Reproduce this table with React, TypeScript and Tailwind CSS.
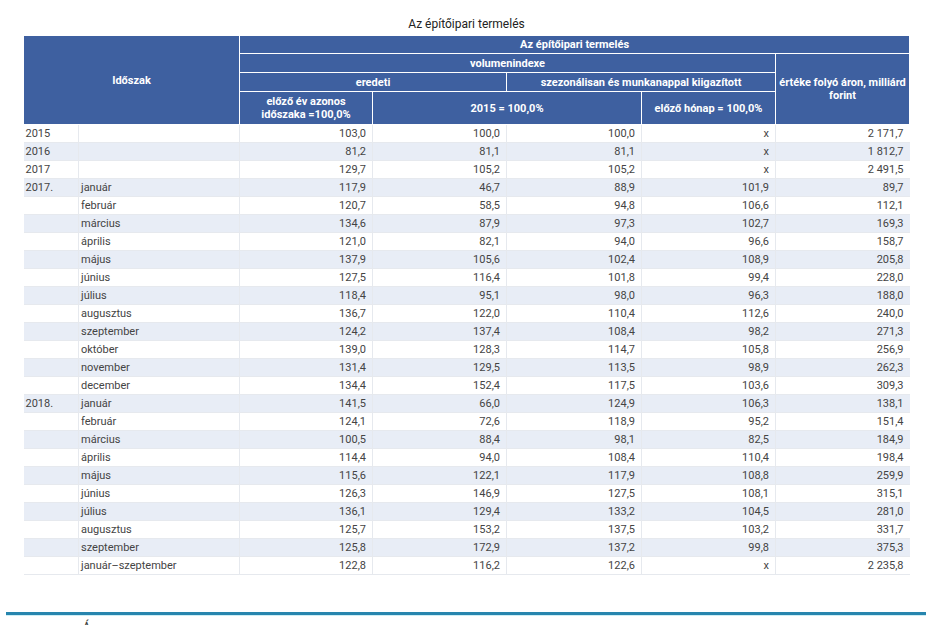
import React from "react";

type Row = { year: string; month: string; v: string[] };

const rows: Row[] = [
  { year: "2015", month: "", v: ["103,0", "100,0", "100,0", "x", "2 171,7"] },
  { year: "2016", month: "", v: ["81,2", "81,1", "81,1", "x", "1 812,7"] },
  { year: "2017", month: "", v: ["129,7", "105,2", "105,2", "x", "2 491,5"] },
  { year: "2017.", month: "január", v: ["117,9", "46,7", "88,9", "101,9", "89,7"] },
  { year: "", month: "február", v: ["120,7", "58,5", "94,8", "106,6", "112,1"] },
  { year: "", month: "március", v: ["134,6", "87,9", "97,3", "102,7", "169,3"] },
  { year: "", month: "április", v: ["121,0", "82,1", "94,0", "96,6", "158,7"] },
  { year: "", month: "május", v: ["137,9", "105,6", "102,4", "108,9", "205,8"] },
  { year: "", month: "június", v: ["127,5", "116,4", "101,8", "99,4", "228,0"] },
  { year: "", month: "július", v: ["118,4", "95,1", "98,0", "96,3", "188,0"] },
  { year: "", month: "augusztus", v: ["136,7", "122,0", "110,4", "112,6", "240,0"] },
  { year: "", month: "szeptember", v: ["124,2", "137,4", "108,4", "98,2", "271,3"] },
  { year: "", month: "október", v: ["139,0", "128,3", "114,7", "105,8", "256,9"] },
  { year: "", month: "november", v: ["131,4", "129,5", "113,5", "98,9", "262,3"] },
  { year: "", month: "december", v: ["134,4", "152,4", "117,5", "103,6", "309,3"] },
  { year: "2018.", month: "január", v: ["141,5", "66,0", "124,9", "106,3", "138,1"] },
  { year: "", month: "február", v: ["124,1", "72,6", "118,9", "95,2", "151,4"] },
  { year: "", month: "március", v: ["100,5", "88,4", "98,1", "82,5", "184,9"] },
  { year: "", month: "április", v: ["114,4", "94,0", "108,4", "110,4", "198,4"] },
  { year: "", month: "május", v: ["115,6", "122,1", "117,9", "108,8", "259,9"] },
  { year: "", month: "június", v: ["126,3", "146,9", "127,5", "108,1", "315,1"] },
  { year: "", month: "július", v: ["136,1", "129,4", "133,2", "104,5", "281,0"] },
  { year: "", month: "augusztus", v: ["125,7", "153,2", "137,5", "103,2", "331,7"] },
  { year: "", month: "szeptember", v: ["125,8", "172,9", "137,2", "99,8", "375,3"] },
  { year: "", month: "január–szeptember", v: ["122,8", "116,2", "122,6", "x", "2 235,8"] },
];

const th = "border border-white bg-[#3e60a0] text-white font-bold text-[11px] leading-[13px] text-center align-middle p-0";

export default function App() {
  return (
    <div className="w-[933px] h-[625px] overflow-hidden bg-white font-['Roboto',sans-serif]">
      <div className="h-[35px] pt-[16px] text-center text-[12px] leading-4 text-[#222]">Az építőipari termelés</div>

      <table className="ml-[23px] w-[886px] table-fixed border-collapse">
        <colgroup>
          <col className="w-[55px]" />
          <col className="w-[161px]" />
          <col className="w-[133px]" />
          <col className="w-[134px]" />
          <col className="w-[135px]" />
          <col className="w-[134px]" />
          <col className="w-[134px]" />
        </colgroup>
        <thead>
          <tr className="h-[18px]">
            <th colSpan={2} rowSpan={4} className={th}>Időszak</th>
            <th colSpan={5} className={th}>Az építőipari termelés</th>
          </tr>
          <tr className="h-[19px]">
            <th colSpan={4} className={th}>volumenindexe</th>
            <th rowSpan={3} className={th + " whitespace-nowrap"}>
              értéke folyó áron, milliárd
              <br />
              forint
            </th>
          </tr>
          <tr className="h-[19px]">
            <th colSpan={2} className={th}>eredeti</th>
            <th colSpan={2} className={th}>szezonálisan és munkanappal kiigazított</th>
          </tr>
          <tr className="h-[33px]">
            <th className={th + " px-[10px]"}>előző év azonos időszaka =100,0%</th>
            <th colSpan={2} className={th}>2015 = 100,0%</th>
            <th className={th}>előző hónap = 100,0%</th>
          </tr>
        </thead>
        <tbody className="text-[11px] text-[#444]">
          {rows.map((r, i) => (
            <tr key={i} className={`h-[18px] ${i % 2 === 1 ? "bg-[#e8edf6]" : "bg-white"}`}>
              <td className="border-r border-b border-[#e6e9ee] pl-[2px] p-0 leading-[17px]">{r.year}</td>
              <td className="border-x border-b border-[#e6e9ee] pl-[2px] p-0 leading-[17px] whitespace-nowrap">{r.month}</td>
              {r.v.map((c, j) => (
                <td key={j} className={`border-x border-b border-[#e6e9ee] text-right pr-[6px] p-0 leading-[17px] ${j === 4 ? "border-r-0" : ""}`}>
                  {c}
                </td>
              ))}
            </tr>
          ))}
        </tbody>
      </table>

      <div className="mt-[37px] ml-[6px] w-[920px] h-[4px] bg-[#2785ae] border-b border-[#cdeef5]"></div>
      <div className="ml-[82px] mt-[2px] text-[14px] leading-5 text-[#444]">Á</div>
    </div>
  );
}
